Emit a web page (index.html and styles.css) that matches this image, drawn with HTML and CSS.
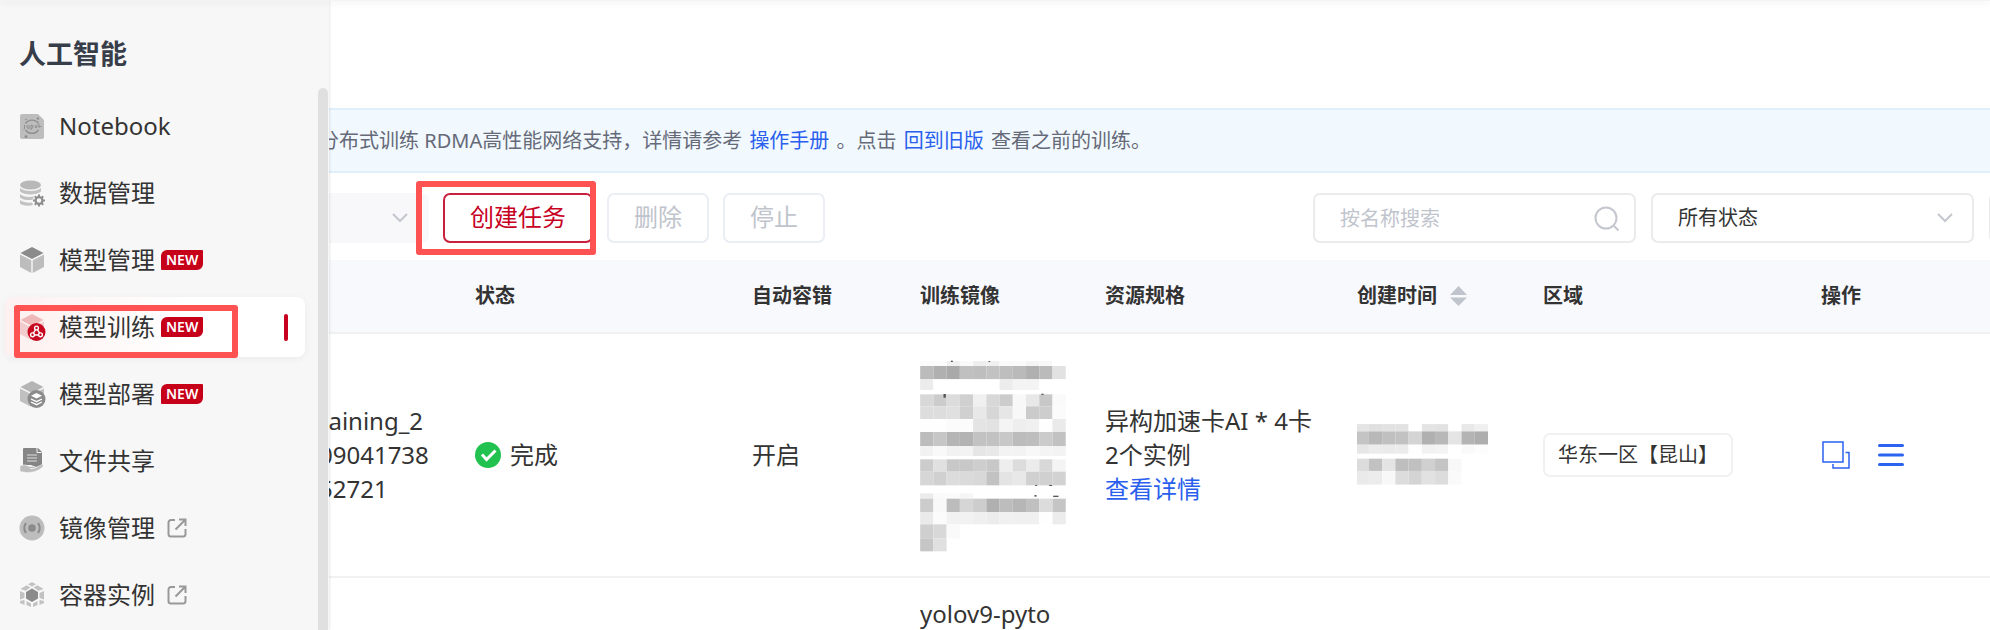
FILE: index.html
```html
<!DOCTYPE html>
<html lang="zh-CN">
<head>
<meta charset="utf-8">
<title>人工智能 - 模型训练</title>
<link rel="stylesheet" href="styles.css">
</head>
<body>
<div class="app">
  <aside class="sidebar">
    <h1 class="sidebar-title">人工智能</h1>
    <nav class="nav">
      <a class="nav-item" href="#">
        <svg class="nav-icon" viewBox="0 0 26 26"><path d="M3 1h16l6 6v17a2 2 0 0 1-2 2H3a2 2 0 0 1-2-2V3a2 2 0 0 1 2-2z" fill="#bdbdbd"/><g fill="none" stroke="#8f8f8f" stroke-width="1.4"><path d="M6.500 10.500c3-4.500 10-4.500 13 0M6.500 17c3 4.500 10 4.500 13 0"/><path d="M5.500 12v3.500q0 1-1 1M8 12v2q0 1.500 2 1.500V12M12 17v-5q2.500 0 2 2t-2 1.500M16 12l1 3 1.500-3M20 11v4M20 13.500h2.500" stroke-width="1"/></g><circle cx="19" cy="5.500" r="1.200" fill="#8f8f8f"/><circle cx="7" cy="6.500" r=".8" fill="#8f8f8f"/><circle cx="7" cy="23.500" r="1.500" fill="#8f8f8f"/></svg>
        <span>Notebook</span>
      </a>
      <a class="nav-item" href="#">
        <svg class="nav-icon" viewBox="0 0 26 26"><ellipse cx="11.500" cy="5" rx="10.500" ry="4.500" fill="#b8b8b8"/><path d="M1 8c4 4 17 4 21 0v3.500c-4 4-17 4-21 0zM1 14c3 3 9 3.500 14 2.500l-1.500 3.200C9 20.500 4 20 1 17.500zM1 20c3 2.500 8 3 12 2.500l1 2.500C9 26.500 3 25.500 1 23.500z" fill="#c2c2c2"/><circle cx="20" cy="20.500" r="3.400" fill="none" stroke="#8e8e8e" stroke-width="2.200"/><path d="M20 14.500v2.500M20 24v2.500M14 20.500h2.500M23.500 20.500H26M15.800 16.300l1.700 1.700M22.500 23l1.700 1.700M15.800 24.700l1.700-1.700M22.500 18l1.700-1.700" stroke="#8e8e8e" stroke-width="2"/></svg>
        <span>数据管理</span>
      </a>
      <a class="nav-item" href="#">
        <svg class="nav-icon" viewBox="0 0 26 26"><path d="M13 0l11.500 6L13 12 1.500 6z" fill="#8b8b8b"/><path d="M1 7.500l11.300 5.700V26L1 20zM25 7.500l-11.300 5.700V26L25 20z" fill="#bdbdbd"/></svg>
        <span>模型管理</span><span class="badge">NEW</span>
      </a>
      <a class="nav-item nav-item-active" href="#">
        <svg class="nav-icon" viewBox="0 0 26 26"><path d="M13 0l11.500 6L13 12 1.500 6z" fill="#efb8b8"/><path d="M1 7.500l11.300 5.700V26L1 20zM25 7.500l-11.300 5.700V26L25 20z" fill="#f2cccc"/><circle cx="17.500" cy="18" r="9" fill="#c7061f"/><g fill="none" stroke="#fff" stroke-width="1.400"><circle cx="17.500" cy="14" r="1.900"/><circle cx="13.500" cy="20.800" r="1.900"/><circle cx="21.500" cy="20.800" r="1.900"/><path d="M16.500 15.800l-2.200 3.400M18.500 15.800l2.200 3.400M15.500 21h4"/></g></svg>
        <span>模型训练</span><span class="badge">NEW</span>
        <span class="active-bar"></span>
        <span class="callout callout-nav"></span>
      </a>
      <a class="nav-item" href="#">
        <svg class="nav-icon" viewBox="0 0 26 26"><path d="M13 0l11.500 6L13 12 1.500 6z" fill="#b5b5b5"/><path d="M1 7.500l11.300 5.700V26L1 20zM25 7.500l-11.300 5.700V26L25 20z" fill="#c0c0c0"/><circle cx="17.500" cy="18" r="9" fill="#8b8b8b"/><path d="M17.500 12l5.500 2.800-5.500 2.800-5.500-2.800z" fill="#fff"/><path d="M12 18l5.500 2.700L23 18M12 21l5.500 2.700L23 21" fill="none" stroke="#fff" stroke-width="1.300"/></svg>
        <span>模型部署</span><span class="badge">NEW</span>
      </a>
      <a class="nav-item" href="#">
        <svg class="nav-icon" viewBox="0 0 26 26"><path d="M5 0h14l4 4v13l-6 2-5-2H4V1a1 1 0 0 1 1-1z" fill="#858585"/><path d="M18 0v4.500h4.500" fill="none" stroke="#f7f7f7"/><path d="M8 7h10M8 10h10M8 13h10" stroke="#ddd" stroke-width="1.200"/><path d="M1 18c4-2 7-1 9 .5h5c1.500 0 1.500 2 0 2h-4c4 1 8-2 11-3.500 2-1 3 .5 2 1.500-5 5-11 6-16 6-3 0-5-1-7-1z" fill="#bdbdbd" stroke="#f7f7f7" stroke-width=".5"/></svg>
        <span>文件共享</span>
      </a>
      <a class="nav-item" href="#">
        <svg class="nav-icon" viewBox="0 0 26 26"><circle cx="13" cy="13" r="12.500" fill="#bdbdbd"/><circle cx="13" cy="13" r="3.800" fill="#8b8b8b"/><path d="M7 8q-3.500 5 0 10M19 8q3.500 5 0 10" fill="none" stroke="#8b8b8b" stroke-width="2"/></svg>
        <span>镜像管理</span>
        <svg class="nav-external" viewBox="0 0 20 20"><path d="M8 2H4a2.500 2.500 0 0 0-2.500 2.500v11.500A2.500 2.500 0 0 0 4 18.500h12a2.500 2.500 0 0 0 2.500-2.500v-5M12 1.500h6.500V8M18.500 1.500L8.500 11.500"/></svg>
      </a>
      <a class="nav-item" href="#">
        <svg class="nav-icon" viewBox="0 0 26 26"><path d="M13 6.500l6 3.500v6.500l-6 3.500-6-3.500V10z" fill="#8b8b8b"/><path d="M13 0l4 2.300L13 4.600 9 2.300zM7.500 3.300l4 2.300L6.500 8.700 1.500 7zM18.500 3.300l-4 2.300 5 3.100 5-1.700zM1 9l4.500 2v5L1 17.500zM25 9l-4.500 2v5l4.500 1.500zM1 19l4.500-1v5L1 21zM25 19l-4.500-1v5l4.500-2zM7.500 19l4.500 2.500V25l-4.500-2zM18.500 19L14 21.500V25l4.500-2z" fill="#c2c2c2"/></svg>
        <span>容器实例</span>
        <svg class="nav-external" viewBox="0 0 20 20"><path d="M8 2H4a2.500 2.500 0 0 0-2.500 2.500v11.500A2.500 2.500 0 0 0 4 18.500h12a2.500 2.500 0 0 0 2.500-2.500v-5M12 1.500h6.500V8M18.500 1.500L8.500 11.500"/></svg>
      </a>
    </nav>
    <div class="scroll-thumb"></div>
  </aside>

  <main class="main">
    <div class="notice">分布式训练 RDMA高性能网络支持，详情请参考 <a href="#">操作手册</a> 。点击 <a href="#">回到旧版</a> 查看之前的训练。</div>

    <div class="toolbar">
      <div class="field field-project">
        <select class="control" aria-label="项目" disabled></select>
        <svg class="chevron" viewBox="0 0 16 10"><path d="M1 1l7 7 7-7"/></svg>
      </div>
      <div class="create">
        <button class="btn btn-primary" type="button">创建任务</button>
        <span class="callout callout-create"></span>
      </div>
      <button class="btn" type="button" disabled>删除</button>
      <button class="btn" type="button" disabled>停止</button>
      <div class="filters">
        <div class="field">
          <input class="control" type="text" placeholder="按名称搜索" aria-label="按名称搜索">
          <svg class="search-icon" viewBox="0 0 26 26"><circle cx="12" cy="12" r="10.500"/><path d="M20 20l4.500 4.500"/></svg>
        </div>
        <div class="field">
          <select class="control" aria-label="状态"><option>所有状态</option></select>
          <svg class="chevron" viewBox="0 0 16 10"><path d="M1 1l7 7 7-7"/></svg>
        </div>
        <button class="btn btn-more" type="button" aria-label="更多"></button>
      </div>
    </div>

    <table class="tasks">
      <colgroup><col class="c-name"><col class="c-status"><col class="c-fault"><col class="c-image"><col class="c-spec"><col class="c-time"><col class="c-region"><col></colgroup>
      <thead>
        <tr><th></th><th>状态</th><th>自动容错</th><th>训练镜像</th><th>资源规格</th>
          <th><span class="sortable">创建时间<svg class="sort" viewBox="0 0 17 20"><path d="M8.500 0L17 9H0zM8.500 20L17 11.500H0z"/></svg></span></th>
          <th>区域</th><th>操作</th></tr>
      </thead>
      <tbody>
        <tr>
          <td class="name"><div class="name-text">raining_2<br>09041738<br>52721</div></td>
          <td><span class="status"><svg class="status-icon" viewBox="0 0 26 26"><circle cx="13" cy="13" r="13" fill="#22c251"/><path d="M7 12.500l4.500 5 9-9" fill="none" stroke="#fff" stroke-width="3"/></svg>完成</span></td>
          <td>开启</td>
          <td><svg class="mosaic mosaic-image" viewBox="57 11 437 612" data-mosaic="image"></svg></td>
          <td class="spec">异构加速卡AI * 4卡<br>2个实例<br><a href="#">查看详情</a></td>
          <td><svg class="mosaic mosaic-time" viewBox="800 457 400 204" data-mosaic="time"></svg></td>
          <td><span class="tag">华东一区【昆山】</span></td>
          <td><span class="actions">
            <button class="icon-btn" type="button" aria-label="复制"><svg viewBox="0 0 28 28"><path d="M2 1h20v20H2zM24.500 11.500H28V27H12v-4"/></svg></button>
            <button class="icon-btn" type="button" aria-label="菜单"><svg viewBox="0 0 28 28"><path class="bars" d="M2.500 4.500h23M2.500 14h23M2.500 23.500h23"/></svg></button>
          </span></td>
        </tr>
        <tr class="row-next"><td></td><td></td><td></td><td>yolov9-pyto</td><td></td><td></td><td></td><td></td></tr>
      </tbody>
    </table>
  </main>
</div>
<script src="mosaic.js"></script>
</body>
</html>
```
FILE: styles.css
```css
* { box-sizing: border-box; }

body {
  margin: 0;
  background: #fff;
  color: #333;
  font-family: "Noto Sans", "Noto Sans CJK SC", sans-serif;
  font-size: 24px;
  line-height: 34px;
}

a { color: #2a5fee; text-decoration: none; }

.app {
  display: flex;
  position: relative;
  height: 100vh;
  overflow: hidden;
}

.app::before {
  content: "";
  position: absolute;
  inset: 0 0 auto;
  z-index: 3;
  height: 1px;
  background: #f4f4f4;
  box-shadow: 0 1px 6px rgba(0, 0, 0, 0.2);
}

/* Sidebar */
.sidebar {
  position: relative;
  z-index: 2;
  flex: none;
  width: 329px;
  background: #f7f7f7;
  box-shadow: 0 0 3px rgba(0, 0, 0, 0.16);
}

.sidebar-title {
  margin: 0;
  padding: 34px 19px 22px;
  color: #373d49;
  font-size: 27px;
  line-height: 40px;
}

.nav {
  display: grid;
  gap: 7px;
  padding: 0 24px 0 5px;
}

.nav-item {
  display: flex;
  position: relative;
  align-items: center;
  height: 60px;
  padding-left: 14px;
  border-radius: 8px;
  color: #333;
}

.nav-icon {
  flex: none;
  width: 26px;
  height: 26px;
  margin-right: 14px;
  overflow: visible;
}

.nav-external {
  width: 20px;
  height: 20px;
  margin-left: 12px;
  fill: none;
  stroke: #999;
  stroke-width: 2;
}

.nav-item-active {
  background: linear-gradient(90deg, #fdf0f0, #fff 60%);
  box-shadow: 0 2px 8px rgba(0, 0, 0, 0.05);
}

.active-bar {
  width: 4px;
  height: 27px;
  margin: 0 17px 0 auto;
  border-radius: 2px;
  background: #c7001f;
}

.badge {
  margin-left: 6px;
  padding: 0 5px;
  border-radius: 6px 1px;
  background: #c7001a;
  color: #fff;
  font-size: 14px;
  font-weight: 600;
  line-height: 20px;
}

.scroll-thumb {
  position: absolute;
  top: 88px;
  right: 1px;
  bottom: 0;
  width: 10px;
  border-radius: 5px 5px 0 0;
  background: #e0e0e0;
}

.callout {
  position: absolute;
  border: 6px solid #ff5252;
  border-radius: 3px;
  pointer-events: none;
}

.callout-nav { inset: 8px 67px -1px 9px; }
.callout-create { inset: -12px -3px -12px -27px; }

/* Content */
.main {
  flex: 1;
  min-width: 0;
  padding-top: 108px;
  overflow: hidden;
}

.notice {
  height: 65px;
  margin-left: -10px;
  border: solid #dff0fb;
  border-width: 2px 0;
  background: #f1f9ff;
  color: #666a78;
  font-size: 20px;
  line-height: 62px;
  white-space: nowrap;
}

.notice a { margin: 0 2px; }

.toolbar {
  display: flex;
  gap: 14px;
  padding: 20px 0 17px;
}

.field {
  display: flex;
  position: relative;
  width: 323px;
}

.field-project { width: 100px; }

.control {
  width: 100%;
  height: 50px;
  padding: 0 25px;
  border: 2px solid #ebebeb;
  border-radius: 7px;
  background: #fff;
  color: #333;
  font: inherit;
  font-size: 20px;
  line-height: 30px;
  appearance: none;
}

.control::placeholder { color: #c0c4cc; opacity: 1; }

.field-project .control {
  border: 0;
  border-radius: 0 7px 7px 0;
  background: #f5f5fa;
}

.chevron, .search-icon {
  position: absolute;
  fill: none;
  stroke: #c4c7ce;
  stroke-width: 2;
  pointer-events: none;
}

.chevron { top: 20px; right: 21px; width: 16px; height: 10px; }
.search-icon { top: 13px; right: 16px; width: 26px; height: 26px; }

.create { position: relative; }

.btn {
  height: 50px;
  padding: 0 25px 2px;
  border: 2px solid #ebeef5;
  border-radius: 7px;
  background: #fff;
  color: #c0c4cc;
  font: inherit;
  line-height: 34px;
}

.btn-primary { border-color: #c9213b; color: #c7001f; }

.filters {
  display: flex;
  gap: 15px;
  margin-left: auto;
}

.btn-more {
  flex: none;
  width: 50px;
  margin-right: -49px;
  padding: 0;
  border-color: #ebebeb;
}

/* Table */
.tasks {
  width: 100%;
  table-layout: fixed;
  border-collapse: separate;
  border-spacing: 0;
}

.c-name { width: 132px; }
.c-status { width: 277px; }
.c-fault { width: 168px; }
.c-image { width: 185px; }
.c-spec { width: 252px; }
.c-time { width: 186px; }
.c-region { width: 278px; }

th, td {
  padding: 19px 0 19px 14px;
  border-bottom: 2px solid #f1f1f2;
  text-align: left;
  white-space: nowrap;
}

th {
  height: 73px;
  background: #f8f9fd;
  font-size: 20px;
  font-weight: 700;
}

.name { padding-left: 0; }
.name-text { margin-left: -10px; }

.sortable { display: flex; align-items: center; gap: 13px; }
.sort { width: 17px; height: 20px; fill: #c0c4cc; }

.status { display: flex; align-items: center; gap: 9px; }
.status-icon { width: 26px; height: 26px; }

.mosaic { display: block; }
.mosaic-image { width: 146px; height: 204px; }
.mosaic-time { width: 133px; height: 68px; }

.tag {
  display: inline-block;
  padding: 5px 13px;
  border: 2px solid #f1f1f1;
  border-radius: 7px;
  font-size: 20px;
  line-height: 30px;
}

.actions { display: flex; gap: 28px; }

.icon-btn {
  padding: 0;
  border: 0;
  background: none;
}

.icon-btn svg {
  display: block;
  width: 28px;
  height: 28px;
  overflow: visible;
  fill: none;
  stroke: #2b62f0;
  stroke-width: 1.5;
}

.icon-btn .bars { stroke-width: 3; stroke-linecap: round; }
```
FILE: mosaic.js
```js
// Pixelated blocks that mask private values.
// Each row: [top, height, grey level of each cell as two hex digits].
const MOSAICS = {
  image: {
    x: 57, size: 39.7,
    rows: [
      [35, 15, "fbfbf0faeef0fafaf4f8ff"],
      [50, 40, "bbb0a9c0bec2bebab0bbe2"],
      [90, 32, "ecfffffffffFecf4f4ffff"],
      [135, 36, "d8ccdcd0f0d8ccf8e8c8fa"],
      [171, 38, "dddde0d0e8d6e6f8cbcdfb"],
      [209, 39, "fefefbfce4e2f4eef0feea"],
      [248, 42, "bcc6b5b3c2c2c8bcbecbc2"],
      [290, 30, "f2f9f2f3e6e8f3f3f8f4f3"],
      [330, 37, "cce0c8c8cec8eedcecd8f4"],
      [367, 41, "d6d0dcdad8c2e4e8d0d0d2"],
      [432, 16, "ecfafbf6ffffffffffffff"],
      [448, 40, "ccf8bcd6cdb0bdb6c0dcc5"],
      [488, 37, "eafbf2f2efecf0f0f0feec"],
      [525, 42, "cfd8fa"],
      [567, 39, "c6e0"]
    ],
    specks: [[149, 34, 6, 4], [262, 35, 5, 3], [127, 134, 7, 11], [421, 133, 6, 4],
      [402, 407, 6, 3], [444, 407, 9, 3], [400, 437, 6, 5], [456, 439, 16, 4]]
  },
  time: {
    x: 796, size: 39.8,
    rows: [
      [466, 22, "e4e0e2e2ffe4e2ffe8f0"],
      [488, 40, "c4b8c0c2d4b0b8e4b4ae"],
      [528, 27, "e6eceaecfef2f4fffafd"],
      [570, 37, "dcc2e4bec0d0c4f8"],
      [607, 41, "eaecf8dcd4e2dcfa"]
    ],
    specks: []
  }
};

function addRect(svg, x, y, width, height, fill) {
  const rect = document.createElementNS("http://www.w3.org/2000/svg", "rect");
  Object.entries({ x, y, width, height, fill }).forEach(([k, v]) => rect.setAttribute(k, v));
  svg.appendChild(rect);
}

document.querySelectorAll("[data-mosaic]").forEach((svg) => {
  const { x, size, rows, specks } = MOSAICS[svg.dataset.mosaic];
  rows.forEach(([top, height, levels]) => {
    levels.match(/../g).forEach((level, i) => {
      addRect(svg, x + i * size, top, size, height, "#" + level.repeat(3));
    });
  });
  specks.forEach(([sx, sy, w, h]) => addRect(svg, sx, sy, w, h, "#555"));
});
```
